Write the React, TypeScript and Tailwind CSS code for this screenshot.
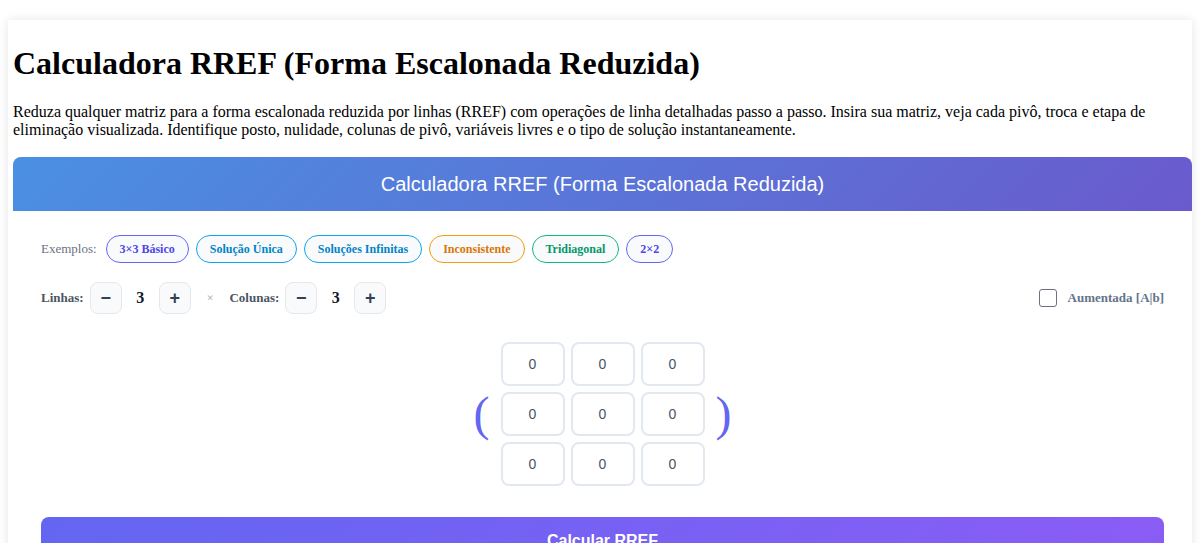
import { useState } from "react";

const examples = [
  { label: "3×3 Básico", cls: "border-[#6366f1] text-[#4f46e5]" },
  { label: "Solução Única", cls: "border-[#0ea5e9] text-[#0284c7]" },
  { label: "Soluções Infinitas", cls: "border-[#0ea5e9] text-[#0284c7]" },
  { label: "Inconsistente", cls: "border-[#f59e0b] text-[#d97706]" },
  { label: "Tridiagonal", cls: "border-[#10b981] text-[#059669]" },
  { label: "2×2", cls: "border-[#6366f1] text-[#4f46e5]" },
];

function Stepper({
  label,
  value,
  onChange,
}: {
  label: string;
  value: number;
  onChange: (v: number) => void;
}) {
  return (
    <div className="flex items-center gap-1.5">
      <span className="text-[13px] font-bold text-[#4b5563]">{label}</span>
      <button
        onClick={() => onChange(Math.max(1, value - 1))}
        className="flex h-8 w-8 items-center justify-center rounded-lg border border-[#e5e7eb] bg-[#f8fafc] font-['Liberation_Sans',sans-serif] text-lg font-bold text-[#334155]"
      >
        −
      </button>
      <span className="w-[25px] text-center text-base font-bold text-[#111827]">
        {value}
      </span>
      <button
        onClick={() => onChange(Math.min(6, value + 1))}
        className="flex h-8 w-8 items-center justify-center rounded-lg border border-[#e5e7eb] bg-[#f8fafc] font-['Liberation_Sans',sans-serif] text-lg font-bold text-[#334155]"
      >
        +
      </button>
    </div>
  );
}

export default function App() {
  const [rows, setRows] = useState(3);
  const [cols, setCols] = useState(3);
  const [augmented, setAugmented] = useState(false);

  return (
    <div className="min-h-screen bg-white pt-5 font-['Liberation_Serif',serif] text-black">
      <div className="mx-2 bg-white pl-[5px] pt-[25px] shadow-[0_0_10px_rgba(0,0,0,0.1)]">
        <h1 className="mb-[21px] text-[32px] font-bold leading-[36.8px]">
          Calculadora RREF (Forma Escalonada Reduzida)
        </h1>
        <p className="mb-[17px] text-base leading-[18.4px]">
          Reduza qualquer matriz para a forma escalonada reduzida por linhas
          (RREF) com operações de linha detalhadas passo a passo. Insira sua
          matriz, veja cada pivô, troca e etapa de eliminação visualizada.
          Identifique posto, nulidade, colunas de pivô, variáveis livres e o tipo
          de solução instantaneamente.
        </p>

        <div className="rounded-t-lg bg-white">
          <div className="rounded-t-lg bg-[linear-gradient(135deg,#4a90e2,#6a5acd)] py-[15px] text-center font-['Liberation_Sans',sans-serif] text-xl leading-6 text-white">
            Calculadora RREF (Forma Escalonada Reduzida)
          </div>

          <div className="px-7 pt-6 pb-10">
            <div className="flex items-center gap-[7px]">
              <span className="mr-[2px] text-[13px] text-[#6b7280]">Exemplos:</span>
              {examples.map((ex) => (
                <button
                  key={ex.label}
                  className={`rounded-full border bg-[#f8fafc] px-[13px] py-[5px] text-xs leading-4 font-bold ${ex.cls}`}
                >
                  {ex.label}
                </button>
              ))}
            </div>

            <div className="mt-[19px] flex items-center">
              <Stepper label="Linhas:" value={rows} onChange={setRows} />
              <span className="mx-[16px] text-xs text-[#9ca3af]">×</span>
              <Stepper label="Colunas:" value={cols} onChange={setCols} />
              <label className="ml-auto flex items-center gap-[11px]">
                <input
                  type="checkbox"
                  checked={augmented}
                  onChange={(e) => setAugmented(e.target.checked)}
                  className="h-[18px] w-[18px] appearance-none rounded-[3px] border border-[#6b7280] bg-white checked:bg-[#6366f1]"
                />
                <span className="text-[13px] font-bold text-[#64748b]">
                  Aumentada [A|b]
                </span>
              </label>
            </div>

            <div className="mt-7 flex items-center justify-center gap-[11px]">
              <span className="text-5xl leading-none text-[#6366f1]">(</span>
              <div
                className="grid gap-1.5"
                style={{ gridTemplateColumns: `repeat(${cols}, 64px)` }}
              >
                {Array.from({ length: rows * cols }).map((_, i) => (
                  <input
                    key={i}
                    defaultValue="0"
                    className="h-11 w-16 rounded-lg border-2 border-[#e2e8f0] bg-white text-center font-['Liberation_Sans',sans-serif] text-sm text-[#4b5563] outline-none"
                  />
                ))}
              </div>
              <span className="text-5xl leading-none text-[#6366f1]">)</span>
            </div>

            <button className="mt-[31px] w-full rounded-lg bg-[linear-gradient(135deg,#6366f1,#8b5cf6)] py-3.5 font-['Liberation_Sans',sans-serif] text-base font-bold leading-5 text-white">
              Calcular RREF
            </button>
          </div>
        </div>
      </div>
    </div>
  );
}
